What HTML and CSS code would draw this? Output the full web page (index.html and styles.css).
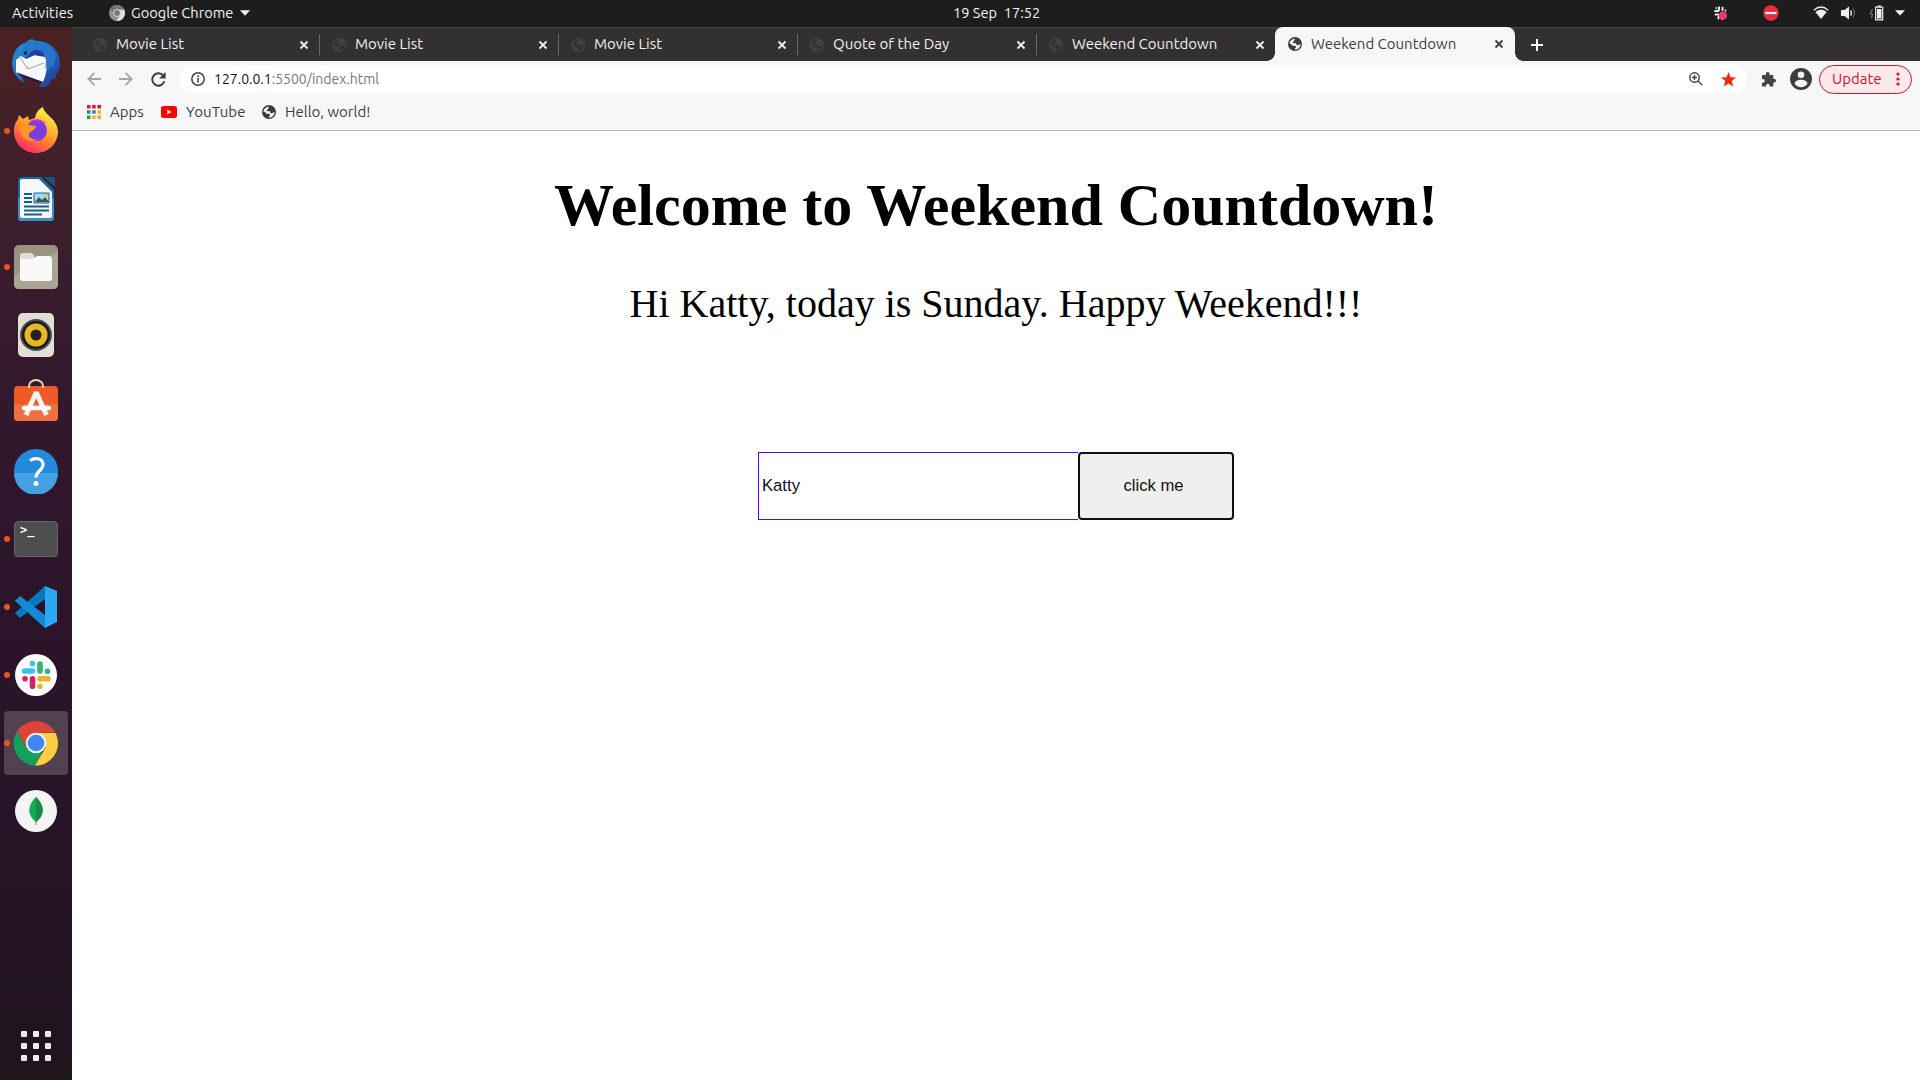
FILE: index.html
```html
<!DOCTYPE html>
<html lang="en">
<head>
<meta charset="utf-8">
<title>Weekend Countdown</title>
<link rel="stylesheet" href="styles.css">
</head>
<body>
<svg width="0" height="0" class="defs" aria-hidden="true">
  <symbol id="globe" viewBox="0 0 14 14"><circle cx="7" cy="7" r="7" class="g-disc"/><path class="g-land" d="M1.300 6.500C2 3.500 4.500 1.300 7.500 1.400L6.200 2.800v1.500L4.500 5l.8 1.300h3v1.500l1.500.8 1.200-1.200h1.700C12.300 10.500 10 12.600 7 12.700V11.500L8.300 10 7 8.700H4.500L3 7z"/></symbol>
  <symbol id="close" viewBox="0 0 10 10"><path d="M1.500 1.500l7 7M8.500 1.500l-7 7" fill="none" stroke="currentColor" stroke-width="1.800"/></symbol>
</svg>
<header class="topbar">
  <span class="activities">Activities</span>
  <div class="app-menu">
    <svg width="16" height="16" viewBox="0 0 16 16"><circle cx="8" cy="8" r="8" fill="#929292"/><path d="M8 4.400h7.100A8 8 0 0 1 7.500 16l3.600-6.200z" fill="#ddd"/><path d="M1 4a8 8 0 0 1 14 .4H8A4 4 0 0 0 4.300 8z" fill="#757575"/><circle cx="8" cy="8" r="3.500" fill="#777" stroke="#ddd"/></svg>
    <span class="app-name">Google Chrome</span>
    <svg width="10" height="6" viewBox="0 0 10 6"><path d="M0 .3h10L5 5.800z" fill="#f2f2f2"/></svg>
  </div>
  <span class="clock">19 Sep&nbsp; 17:52</span>
  <div class="tray">
    <svg class="t-slack" width="15" height="16" viewBox="0 0 15 16"><g stroke="#e8e8e8" stroke-width="2" stroke-linecap="round"><path d="M6 2.200v2.500M2 6h3.500M9.500 2.500v2.500M12.500 5.500v0M2.500 9.500h2.500M5.500 11.500v2M9 14v0M3.300 3v0"/></g><circle cx="10" cy="10.500" r="4" fill="#f33379"/></svg>
    <svg class="t-stop" width="16" height="16" viewBox="0 0 16 16"><circle cx="8" cy="8" r="7.700" fill="#f2283f"/><path d="M2.500 8h11" stroke="#fff" stroke-width="2.200"/></svg>
    <svg class="t-wifi" width="16" height="14" viewBox="0 0 16 14"><path d="M.8 4.300Q8-2.300 15.200 4.300" fill="none" stroke="#eee" stroke-width="1.200"/><path d="M2.300 6Q8 .8 13.700 6L8 13z" fill="#eee"/></svg>
    <svg class="t-vol" width="16" height="14" viewBox="0 0 16 14"><path d="M0 4h3.500L8 .5v13L3.500 10H0z" fill="#eee"/><path d="M9.500 4.500q2 2.500 0 5" fill="none" stroke="#ddd" stroke-width="1.400"/><path d="M11.800 2.500q3.500 4.500 0 9" fill="none" stroke="#777"/></svg>
    <svg class="t-bat" width="15" height="16" viewBox="0 0 15 16"><path d="M3.500 4L1 9h2.500L2.500 13" fill="none" stroke="#888"/><path d="M6.700 2.200h7v12.600h-7z" fill="#1d1d1d" stroke="#eee" stroke-width="1.200"/><path d="M8.500 .5h3.500v1.500H8.500zM8 4h4.500v9.500H8z" fill="#eee"/></svg>
    <svg class="t-arrow" width="10" height="6" viewBox="0 0 10 6"><path d="M0 .3h10L5 5.500z" fill="#f2f2f2"/></svg>
  </div>
</header>
<div class="desktop">
  <nav class="dock">
    <div class="tile"><svg width="48" height="48" viewBox="0 0 48 48"><defs><linearGradient id="tb" x1="0" y1="0" x2="1" y2="1"><stop offset="0" stop-color="#2494dc"/><stop offset=".6" stop-color="#1c67bd"/><stop offset="1" stop-color="#2c2a86"/></linearGradient></defs><path d="M1 18C3 9 9 5 13 4l4-3 3-1 4 2c14-1 25 11 24 24l-2 8-2 1v4l-5 2-1 5-4 2-3 1-4-1 3-6-21-7 3 9C4 39 0 32 0 24z" fill="url(#tb)"/><path d="M9 17l5 3 9-4 10 1c3 8 2 17-2 26L4 34V21z" fill="#f6f8fc"/><path d="M7 17l9 13 16-6" fill="none" stroke="#9aa0aa"/><path d="M4 33l27 10-4 .5L10 38z" fill="#29164c"/><path d="M17 2l7 1c9 0 18 6 20 14l-3 12-2-3-2 5-2-4-2 3c2-8 1-12-2-14-6-5-13 2-20 1-4-2 1-11 6-15z" fill="#2776cb"/><path d="M20 12c5-2 11-1 13 6l-11-2-9 4z" fill="#233d9c"/><circle cx="13.500" cy="14" r="1.700" fill="#223"/></svg></div>
    <div class="tile run"><svg width="46" height="48" viewBox="0 0 46 48"><defs><linearGradient id="ff" x1=".8" y1=".1" x2=".3" y2="1"><stop offset="0" stop-color="#fff044"/><stop offset=".5" stop-color="#ff952a"/><stop offset="1" stop-color="#ff2565"/></linearGradient></defs><path d="M22 11c1-6 4-9 8-11 1 8 14 11 15 24 0 13-10 22-22 22S1 37 1 24c0-6 2-9 4-12l1-4 4 4 5-3 1 4z" fill="url(#ff)"/><circle cx="23.500" cy="23.500" r="10.500" fill="#7b3de0"/><path d="M17 15c2-4 12-4 16 2l-4-2 4 5c-3-4-7-6-16-5z" fill="#b833ce"/><path d="M5 15c5 2 11 3 18 4 0 4-6 5-7 8-1 4 4 6 8 5-7 5-16 0-17-10z" fill="#ff9624"/></svg></div>
    <div class="tile"><svg width="38" height="46" viewBox="0 0 38 46"><path d="M4 1h20l13 13v28q0 3-3 3H4q-3 0-3-3V4q0-3 3-3z" fill="#18699b"/><path d="M1 22h36v20q0 3-3 3H4q-3 0-3-3z" fill="#388fc0"/><path d="M5 3h17l13 13v24q0 2-2 2H5q-2 0-2-2V5q0-2 2-2z" fill="#f7f7f5"/><path d="M27 1h9q2 0 2 2v8z" fill="#0d5685"/><g stroke="#145f8f" stroke-width="2"><path d="M7 18h8M7 22h8M7 26h8M7 30.500h25M7 34.500h25M7 38.500h18"/></g><path d="M17 17h15v10H17z" fill="#9bdcff" stroke="#155f91"/><path d="M18 26l4-5 3 3 3-3 4 5z" fill="#4d4d42"/><circle cx="29" cy="19" r="1.500" fill="#f4bd16"/></svg></div>
    <div class="tile run"><svg width="46" height="46" viewBox="0 0 46 46"><rect x="1" y="1" width="44" height="44" rx="5" fill="#999382"/><path d="M1 32L45 7v33q0 5-5 5H6q-5 0-5-5z" fill="#aaa495"/><path d="M7 12q0-3 3-3h8q2 0 3 3l1 2h13v8H7z" fill="#e1dfd3"/><path d="M7 15h13l4-3h12q3 0 3 3v19q0 3-3 3H10q-3 0-3-3z" fill="#faf9f7"/></svg></div>
    <div class="tile"><svg width="38" height="46" viewBox="0 0 38 46"><rect x="1" y="1" width="36" height="44" rx="5" fill="#e2dfd5"/><circle cx="19" cy="23" r="16" fill="#4a4e50"/><circle cx="19" cy="23" r="14" fill="#161b23"/><circle cx="19" cy="23" r="11.500" fill="#eab722"/><circle cx="19" cy="23" r="5.500" fill="#222"/></svg></div>
    <div class="tile software"><svg width="46" height="44" viewBox="0 0 46 44"><rect x="1" y="8" width="44" height="35" rx="4" fill="#ee5b26"/><path d="M1 26h44v13q0 4-4 4H5q-4 0-4-4z" fill="#ed7040"/><path d="M16 10V8a7 6 0 0 1 14 0v2" fill="none" stroke="#efd6a4" stroke-width="2"/><path d="M13 37l9.500-21h1.500l9.500 21" fill="none" stroke="#faf4ef" stroke-width="5"/><path d="M11 30h25" stroke="#fff" stroke-width="4.500" stroke-linecap="round"/></svg></div>
    <div class="tile help"><svg width="46" height="46" viewBox="0 0 46 46"><circle cx="23" cy="23" r="22" fill="#218add"/><path d="M1 25h44a22 22 0 0 1-44 0z" fill="#43a1e2"/><path d="M17 12.500c4-3 13-3 13 4 0 6.500-7 6-7 13" fill="none" stroke="#fff" stroke-width="3.200"/><circle cx="23" cy="35.500" r="2.500" fill="#fff"/></svg></div>
    <div class="tile run"><div class="terminal"><span>&gt;_</span></div></div>
    <div class="tile run"><svg width="44" height="44" viewBox="0 0 44 44"><path d="M1 28L31 1v13L6 33z" fill="#0879bb"/><path d="M1 16l5-5 25 19v13z" fill="#118cd4"/><path d="M31 1l12 5v31l-12 6z" fill="#2aa8f2"/></svg></div>
    <div class="tile run"><svg width="42" height="42" viewBox="0 0 42 42"><circle cx="21" cy="21" r="21" fill="#fff"/><g stroke-width="5.600" stroke-linecap="round" fill="none"><path d="M9.500 17h8M17.400 9.600v0" stroke="#36c5f0"/><path d="M25 10v7M32.500 17.300v0" stroke="#2eb67d"/><path d="M25 24.700h8M25 32.200v0" stroke="#ecb22e"/><path d="M17.500 24.700v7.500M10 24.700v0" stroke="#e01e5a"/></g></svg></div>
    <div class="tile run active"><svg width="46" height="46" viewBox="0 0 46 46"><path d="M4 11.500a22.300 22.300 0 0 1 38.300 1L23 13l-9.500 15z" fill="#dc4437"/><path d="M4 11.500l10 17.500 15 4-7 12.500A22.300 22.300 0 0 1 4 11.500z" fill="#12a15c"/><path d="M23 13h19.500A22.300 22.300 0 0 1 22 45.500L33 27z" fill="#ffcd41"/><circle cx="23" cy="23" r="10.300" fill="#f3f3f3"/><circle cx="23" cy="23" r="8.300" fill="#4285f4"/></svg></div>
    <div class="tile"><svg width="42" height="42" viewBox="0 0 42 42"><circle cx="21" cy="21" r="21" fill="#f4f4f4"/><path d="M21 31v4" stroke="#aaa" stroke-width="1.500"/><path d="M21 7c9 9 9 18 0 25-9-7-9-16 0-25z" fill="#13aa52"/><path d="M21 7c9 9 9 18 0 25z" fill="#178a48"/></svg></div>
    <div class="apps-grid"><i></i><i></i><i></i><i></i><i></i><i></i><i></i><i></i><i></i></div>
  </nav>
  <main class="browser">
    <div class="tabs">
      <div class="tab"><svg class="globe"><use href="#globe"/></svg><span>Movie List</span><svg class="x"><use href="#close"/></svg></div>
      <div class="tab"><svg class="globe"><use href="#globe"/></svg><span>Movie List</span><svg class="x"><use href="#close"/></svg></div>
      <div class="tab"><svg class="globe"><use href="#globe"/></svg><span>Movie List</span><svg class="x"><use href="#close"/></svg></div>
      <div class="tab"><svg class="globe"><use href="#globe"/></svg><span>Quote of the Day</span><svg class="x"><use href="#close"/></svg></div>
      <div class="tab last"><svg class="globe"><use href="#globe"/></svg><span>Weekend Countdown</span><svg class="x"><use href="#close"/></svg></div>
      <div class="tab current"><svg class="globe"><use href="#globe"/></svg><span>Weekend Countdown</span><svg class="x"><use href="#close"/></svg></div>
      <svg class="plus" width="12" height="12" viewBox="0 0 12 12"><path d="M6 0v12M0 6h12" stroke="#fff" stroke-width="2"/></svg>
    </div>
    <div class="toolbar">
      <svg class="back" width="14" height="14" viewBox="0 0 14 14"><path d="M14 7H1.500M7.500 .8L1.300 7l6.200 6.200" fill="none" stroke="#a5a5a5" stroke-width="1.800"/></svg>
      <svg class="fwd" width="14" height="14" viewBox="0 0 14 14"><path d="M0 7h12.500M6.500 .8L12.700 7l-6.200 6.200" fill="none" stroke="#a5a5a5" stroke-width="1.800"/></svg>
      <svg class="reload" width="15" height="15" viewBox="0 0 15 15"><path d="M12.600 4A6.200 6.200 0 1 0 13.400 9.300" fill="none" stroke="#3c3c3c" stroke-width="1.900"/><path d="M14.600 0v6.600H8z" fill="#3c3c3c"/></svg>
      <div class="omnibox">
        <svg width="14" height="14" viewBox="0 0 14 14"><circle cx="7" cy="7" r="6.200" fill="none" stroke="#444" stroke-width="1.500"/><path d="M7 6v4.500M7 3.300v1.600" stroke="#444" stroke-width="1.600"/></svg>
        <span class="url"><b>127.0.0.1</b>:5500/index.html</span>
        <svg class="mag" width="14" height="14" viewBox="0 0 14 14"><circle cx="5.500" cy="5.500" r="4.700" fill="none" stroke="#444" stroke-width="1.500"/><path d="M9 9l4.300 4.300M5.500 3v5M3 5.500h5" stroke="#444" stroke-width="1.400"/></svg>
        <svg width="15" height="15" viewBox="0 0 15 15"><path d="M7.500 0l2 5.200 5.500.3-4.300 3.500 1.500 5.500-4.700-3.100-4.700 3.100L4.300 9 0 5.500l5.500-.3z" fill="#f4260f"/></svg>
      </div>
      <svg class="ext" width="15" height="15" viewBox="0 0 15 15"><path d="M1 3h3.800V2a1.900 1.900 0 0 1 3.800 0v1h3.700v3.800h.8a1.900 1.900 0 0 1 0 3.800h-.8v3.900H8.600v-1a1.700 1.700 0 0 0-3.400 0v1H1v-3.800h.8a1.900 1.900 0 0 0 0-3.800H1z" fill="#444"/></svg>
      <svg class="avatar" width="22" height="22" viewBox="0 0 22 22"><circle cx="11" cy="11" r="11" fill="#3c3c3c"/><circle cx="11" cy="6.800" r="3.300" fill="#f7f7f7"/><path d="M4.500 15.500c1-5 12-5 13 0-3 5-10 5-13 0z" fill="#f7f7f7"/></svg>
      <div class="update"><span>Update</span><svg width="4" height="14" viewBox="0 0 4 14"><circle cx="2" cy="2" r="1.600"/><circle cx="2" cy="7" r="1.600"/><circle cx="2" cy="12" r="1.600"/></svg></div>
    </div>
    <div class="bookmarks">
      <svg width="14" height="14" viewBox="0 0 14 14"><path d="M0 0h3.500v3.500H0zM5.200 0h3.500v3.500H5.200zM10.400 0H14v3.500h-3.600z" fill="#ee1033"/><path d="M0 5.200h3.500v3.500H0zM0 10.400h3.500V14H0z" fill="#0ca950"/><path d="M5.200 5.200h3.500v3.500H5.200z" fill="#3d6cf5"/><path d="M10.400 5.200H14v3.500h-3.600zM5.200 10.400h3.500V14H5.200zM10.400 10.400H14V14h-3.600z" fill="#ffb000"/></svg>
      <span class="b-apps">Apps</span>
      <svg width="16" height="12" viewBox="0 0 16 12"><rect width="16" height="12" rx="2.500" fill="#f00"/><path d="M6.300 3.500v5L10.500 6z" fill="#fff"/></svg>
      <span class="b-yt">YouTube</span>
      <svg class="globe"><use href="#globe"/></svg>
      <span class="b-hello">Hello, world!</span>
    </div>
    <section class="page">
      <h1>Welcome to Weekend Countdown!</h1>
      <p>Hi Katty, today is Sunday. Happy Weekend!!!</p>
      <form class="entry"><input type="text" value="Katty" aria-label="Name"><button type="button">click me</button></form>
    </section>
  </main>
</div>
</body>
</html>
```
FILE: styles.css
```css
* { box-sizing: border-box; }
body { margin: 0; width: 1920px; height: 1080px; overflow: hidden; display: flex; flex-direction: column; font: 15px/20px "Ubuntu", "Noto Sans", sans-serif; background: #fff; }
svg { display: block; flex: none; }
.defs { position: absolute; }
span { white-space: nowrap; }
.topbar { height: 27px; flex: none; background: #1d1d1d; color: #f2f2f2; display: grid; grid-template-columns: 109px 844px 1fr auto; align-items: center; padding-bottom: 1px; font-size: 14.6px; }
.activities { padding-left: 12px; letter-spacing: .15px; }
.app-menu { display: flex; align-items: center; gap: 6px; }
.app-name { width: 103px; }
.tray { display: flex; align-items: center; padding-right: 15px; }
.t-slack { margin-right: 35px; }
.t-stop { margin-right: 34px; }
.t-wifi { margin-right: 12px; }
.t-vol { margin-right: 12px; }
.t-bat { margin-right: 11px; }
.desktop { flex: 1; min-height: 0; display: flex; }
.dock { width: 72px; flex: none; display: flex; flex-direction: column; align-items: center; gap: 4px; padding: 4px 0 19px; background: linear-gradient(#4a2122, #41202a 12%, #351a2d 30%, #2d152c 50%, #261326 80%, #20141c); }
.tile { width: 64px; height: 64px; flex: none; display: flex; align-items: center; justify-content: center; position: relative; border-radius: 4px; }
.tile.active { background: #524150; }
.software svg { margin-top: -6px; }
.help svg { margin-top: -1px; }
.run::before { content: ""; position: absolute; left: 0; top: 29px; width: 6px; height: 6px; border-radius: 50%; background: #e95420; }
.terminal { width: 44px; height: 36px; border-radius: 4px; background: #4d4d4d; border: 1px solid #666; color: #fff; font: bold 12px/16px "DejaVu Sans Mono", monospace; padding-left: 5px; }
.apps-grid { margin-top: auto; display: grid; grid-template-columns: repeat(3, 6px); gap: 6px; }
.apps-grid i { height: 6px; border-radius: 1px; background: #f0eeec; }
.browser { flex: 1; min-width: 0; display: flex; flex-direction: column; }
.tabs { height: 34px; flex: none; border-top: 1px solid #484646; background: #333031; padding-left: 9px; display: flex; align-items: center; }
.tab { width: 239px; height: 21px; display: flex; align-items: center; padding: 0 10px 0 12px; border-right: 1px solid #696667; color: #f0f0f0; }
.tab span { flex: 1; padding: 0 0 1px 9px; }
.globe { width: 14px; height: 14px; }
.g-disc { fill: var(--disc, #424041); }
.g-land { fill: var(--land, #333031); }
.x { width: 10px; height: 10px; }
.tab.last { border-color: transparent; }
.tab.current { position: relative; width: 240px; height: 34px; margin: -1px 0 0 -1px; border: 0; border-radius: 8px 8px 0 0; background: #f7f7f7; color: #3c3c3c; padding: 0 11px 0 13px; }
.tab.current::before, .tab.current::after { content: ""; position: absolute; bottom: 0; width: 8px; height: 8px; }
.tab.current::before { left: -8px; background: radial-gradient(circle at 0 0, transparent 7.5px, #f7f7f7 8px); }
.tab.current::after { right: -8px; background: radial-gradient(circle at 100% 0, transparent 7.5px, #f7f7f7 8px); }
.current, .bookmarks { --land: #f7f7f7; --disc: #3c3c3c; }
.plus { margin-left: 16px; }
.toolbar { height: 35px; flex: none; background: #f7f7f7; display: flex; align-items: center; padding: 1px 8px 0 15px; }
.back { margin-right: 18px; }
.fwd { margin-right: 18px; }
.reload { margin-right: 14px; }
.omnibox { width: 1567px; height: 28px; border-radius: 14px; background: #fff; display: flex; align-items: center; padding: 0 11px; }
.url { flex: 1; color: #777; padding-left: 9px; font-size: 14px; }
.url b { font-weight: 400; color: #111; }
.mag { margin-right: 18px; }
.ext { margin-left: 14px; }
.avatar { margin-left: 14px; }
.update { width: 93px; height: 29px; margin-left: auto; border: 1px solid #d8122c; border-radius: 15px; background: #fce9ea; color: #d8122c; fill: #d8122c; display: flex; align-items: center; justify-content: space-between; padding: 0 11px 0 12px; }
.bookmarks { height: 35px; flex: none; background: #f7f7f7; border-bottom: 1px solid #bbb; display: flex; align-items: center; padding: 0 0 2px 15px; color: #3c3c3c; }
.bookmarks span { padding-left: 9px; }
.b-apps { width: 60px; }
.b-yt { width: 85px; letter-spacing: .1px; }
.page { flex: 1; text-align: center; font-family: "Liberation Serif", serif; color: #000; }
h1 { font-size: 60px; line-height: 68px; margin: 40px 0 0; }
p { font-size: 40px; line-height: 46px; margin: 42px 0 0; }
.entry { display: flex; justify-content: center; margin: 125px 0 0; }
input, button { height: 68px; margin: 0; font: 16.667px "Liberation Sans", sans-serif; color: #111; }
input { width: 320px; padding: 0 0 0 3px; border: 1px solid #5c00f5; border-right: 0; outline: 0; border-radius: 0; }
button { width: 156px; padding: 0 5px 0 0; border: 2px solid #101010; border-radius: 4px; background: #efefef; }
```
